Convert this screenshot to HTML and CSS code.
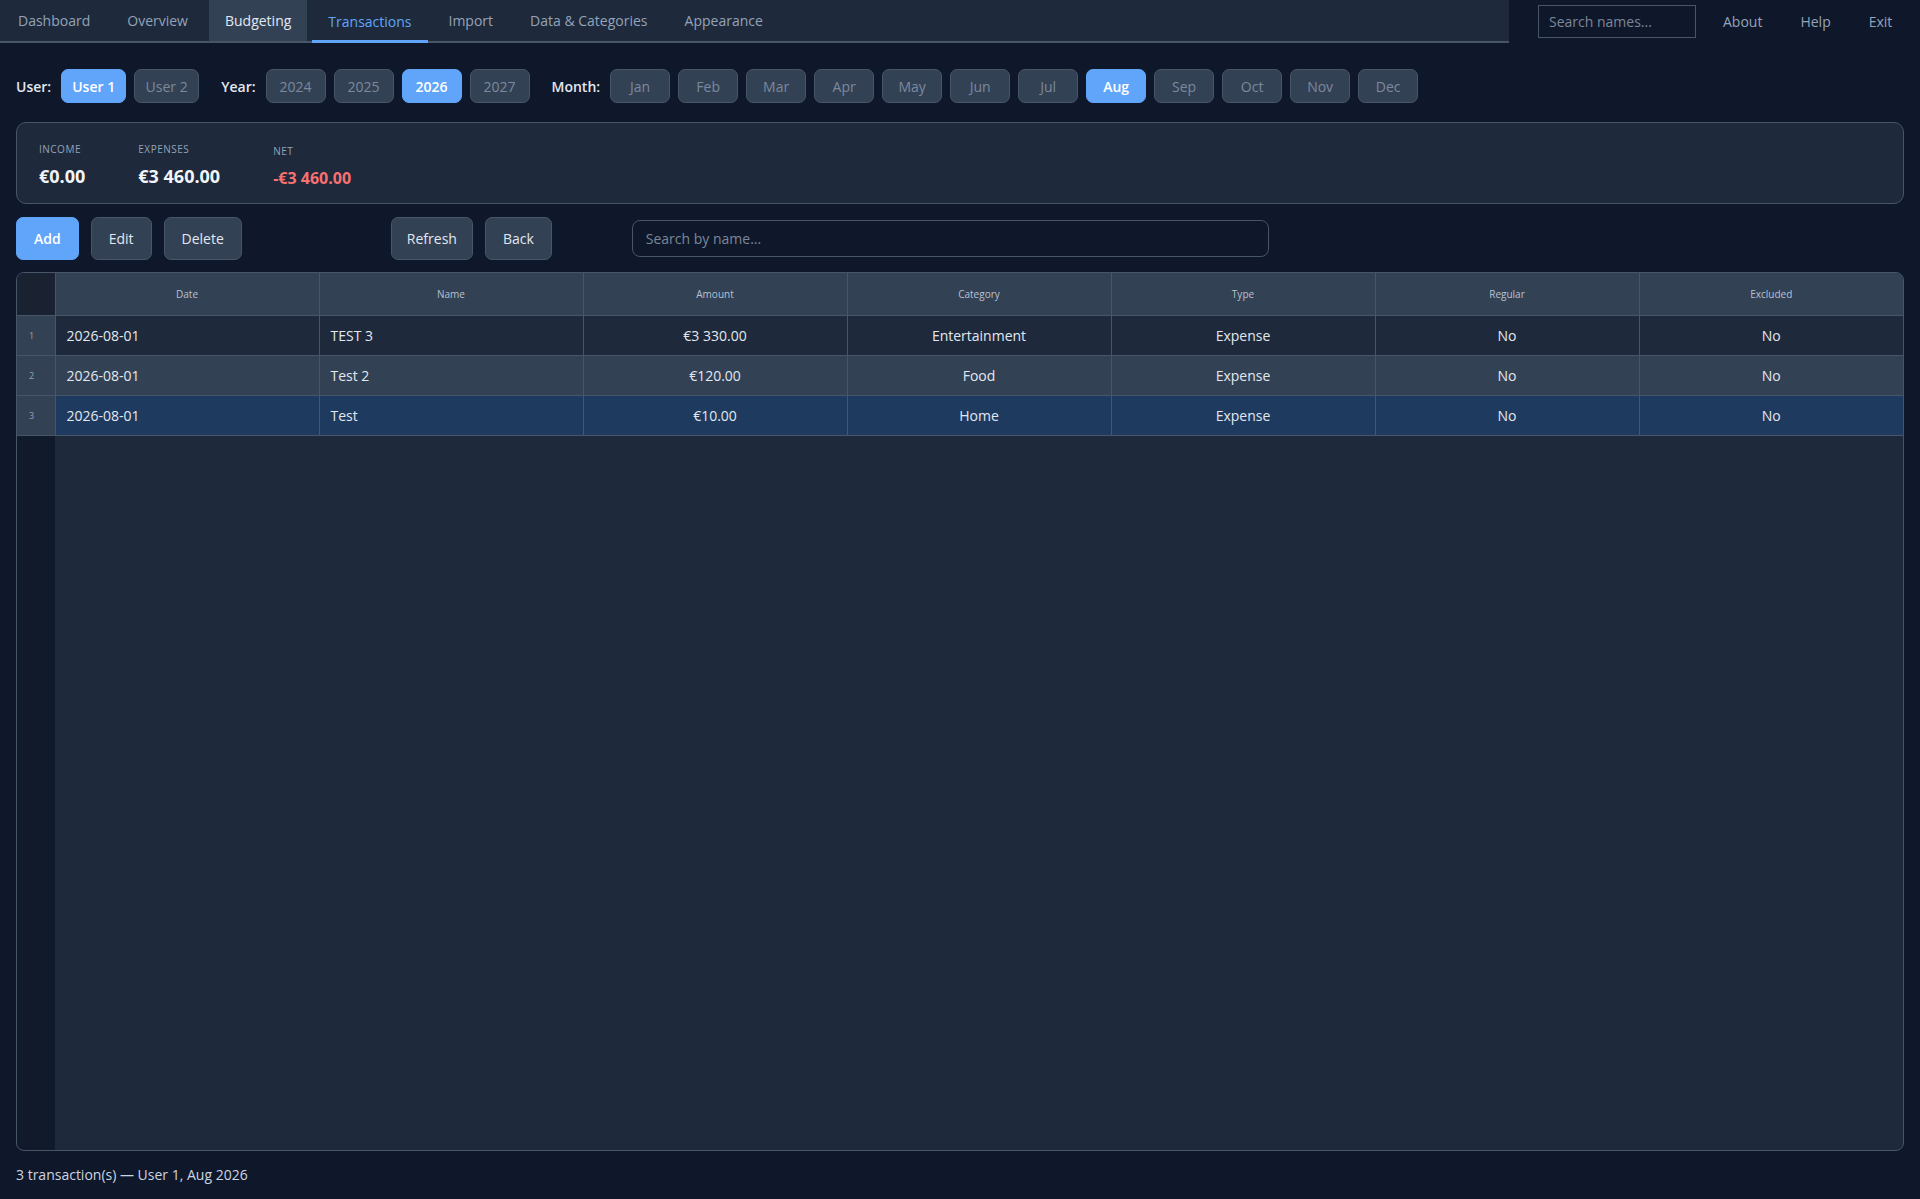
FILE: index.html
```html
<!DOCTYPE html>
<html lang="en">
<head>
    <meta charset="UTF-8">
    <meta name="viewport" content="width=device-width, initial-scale=1.0">
    <title>Transactions</title>
    <link rel="stylesheet" href="styles.css">
</head>
<body>
    <header class="topbar">
        <nav class="tabs">
            <a class="tab">Dashboard</a>
            <a class="tab">Overview</a>
            <a class="tab hover">Budgeting</a>
            <a class="tab active">Transactions</a>
            <a class="tab">Import</a>
            <a class="tab">Data &amp; Categories</a>
            <a class="tab">Appearance</a>
        </nav>
        <div class="top-right">
            <input class="name-search" type="text" placeholder="Search names...">
            <a class="top-link">About</a>
            <a class="top-link">Help</a>
            <a class="top-link">Exit</a>
        </div>
    </header>

    <main class="page">
        <div class="filters">
            <div class="filter-group">
                <span class="filter-label">User:</span>
                <button class="pill user selected">User 1</button>
                <button class="pill user">User 2</button>
            </div>
            <div class="filter-group">
                <span class="filter-label">Year:</span>
                <button class="pill">2024</button>
                <button class="pill">2025</button>
                <button class="pill selected">2026</button>
                <button class="pill">2027</button>
            </div>
            <div class="filter-group">
                <span class="filter-label">Month:</span>
                <button class="pill">Jan</button>
                <button class="pill">Feb</button>
                <button class="pill">Mar</button>
                <button class="pill">Apr</button>
                <button class="pill">May</button>
                <button class="pill">Jun</button>
                <button class="pill">Jul</button>
                <button class="pill selected">Aug</button>
                <button class="pill">Sep</button>
                <button class="pill">Oct</button>
                <button class="pill">Nov</button>
                <button class="pill">Dec</button>
            </div>
        </div>

        <section class="summary">
            <div class="stat">
                <div class="stat-label">Income</div>
                <div class="stat-value">€0.00</div>
            </div>
            <div class="stat">
                <div class="stat-label">Expenses</div>
                <div class="stat-value">€3 460.00</div>
            </div>
            <div class="stat net">
                <div class="stat-label">Net</div>
                <div class="stat-value">-€3 460.00</div>
            </div>
        </section>

        <div class="actions">
            <button class="btn primary">Add</button>
            <button class="btn">Edit</button>
            <button class="btn">Delete</button>
            <button class="btn spaced">Refresh</button>
            <button class="btn">Back</button>
            <input class="table-search" type="text" placeholder="Search by name...">
        </div>

        <div class="grid-wrap">
            <table class="grid">
                <thead>
                    <tr>
                        <th class="num"></th>
                        <th>Date</th>
                        <th>Name</th>
                        <th>Amount</th>
                        <th>Category</th>
                        <th>Type</th>
                        <th>Regular</th>
                        <th>Excluded</th>
                    </tr>
                </thead>
                <tbody>
                    <tr>
                        <td class="num">1</td>
                        <td class="left">2026-08-01</td>
                        <td class="left">TEST 3</td>
                        <td>€3 330.00</td>
                        <td>Entertainment</td>
                        <td>Expense</td>
                        <td>No</td>
                        <td>No</td>
                    </tr>
                    <tr class="alt">
                        <td class="num">2</td>
                        <td class="left">2026-08-01</td>
                        <td class="left">Test 2</td>
                        <td>€120.00</td>
                        <td>Food</td>
                        <td>Expense</td>
                        <td>No</td>
                        <td>No</td>
                    </tr>
                    <tr class="current">
                        <td class="num">3</td>
                        <td class="left">2026-08-01</td>
                        <td class="left">Test</td>
                        <td>€10.00</td>
                        <td>Home</td>
                        <td>Expense</td>
                        <td>No</td>
                        <td>No</td>
                    </tr>
                </tbody>
            </table>
        </div>

        <div class="status">3 transaction(s) — User 1, Aug 2026</div>
    </main>
</body>
</html>
```

FILE: styles.css
```css
* {
    box-sizing: border-box;
}
body {
    margin: 0;
    background-color: #0f172a;
    color: #e2e8f0;
    font-family: "Open Sans", "Noto Sans", sans-serif;
    font-size: 14px;
    height: 1199px;
    overflow: hidden;
}
.topbar {
    display: flex;
    height: 43px;
}
.tabs {
    display: flex;
    flex-shrink: 0;
    gap: 5px;
    width: 1509px;
    padding-left: 2px;
    background-color: #1e293b;
    border-bottom: 2px solid #475569;
}
.tab {
    display: flex;
    align-items: center;
    padding: 0 16px;
    color: #94a3b8;
    font-size: 14px;
    cursor: pointer;
}
.tab.hover {
    background-color: #334155;
    color: #e2e8f0;
}
.tab.active {
    color: #60a5fa;
    box-shadow: inset 0 -3px 0 #60a5fa;
    margin-bottom: -2px;
}
.top-right {
    display: flex;
    align-items: center;
    flex: 1;
    padding-left: 29px;
}
.name-search {
    width: 158px;
    height: 33px;
    background-color: #0f172a;
    border: 1px solid #475569;
    color: #e2e8f0;
    padding: 0 10px;
    font-family: inherit;
    font-size: 14px;
    margin-right: 27px;
}
.name-search::placeholder {
    color: #7b8798;
}
.top-link {
    color: #94a3b8;
    font-size: 14px;
    margin-right: 38px;
    cursor: pointer;
}
.page {
    padding: 26px 16px 0 16px;
}
.filters {
    display: flex;
    align-items: center;
    gap: 22px;
}
.filter-group {
    display: flex;
    align-items: center;
    gap: 8px;
}
.filter-label {
    font-weight: 600;
    font-size: 14px;
    color: #e2e8f0;
    margin-right: 2px;
}
.pill {
    min-width: 60px;
    height: 34px;
    padding: 0 9px;
    background-color: #334155;
    border: 1px solid #475569;
    border-radius: 7px;
    color: #7c899c;
    font-family: inherit;
    font-size: 14px;
}
.pill.user {
    min-width: 65px;
}
.pill.selected {
    background-color: #60a5fa;
    border-color: #60a5fa;
    color: #ffffff;
    font-weight: 600;
}
.summary {
    display: flex;
    gap: 53px;
    margin-top: 19px;
    height: 82px;
    padding: 19px 22px 0 22px;
    background-color: #1e293b;
    border: 1px solid #475569;
    border-radius: 10px;
}
.stat-label {
    font-size: 10px;
    text-transform: uppercase;
    letter-spacing: 0.5px;
    color: #94a3b8;
}
.stat-value {
    margin-top: 8px;
    font-size: 18px;
    font-weight: 700;
    color: #f1f5f9;
}
.stat.net {
    padding-top: 2px;
}
.stat.net .stat-value {
    font-size: 16px;
    color: #f87171;
    margin-top: 9px;
}
.actions {
    display: flex;
    align-items: center;
    gap: 12px;
    margin-top: 13px;
}
.btn {
    height: 43px;
    padding: 0 17px;
    background-color: #334155;
    border: 1px solid #475569;
    border-radius: 7px;
    color: #e2e8f0;
    font-family: inherit;
    font-size: 14px;
}
.btn.primary {
    background-color: #60a5fa;
    border-color: #60a5fa;
    color: #ffffff;
    font-weight: 600;
}
.btn.spaced {
    margin-left: 137px;
    padding: 0 15px;
}
.table-search {
    width: 637px;
    height: 37px;
    margin-left: 68px;
    padding: 0 13px;
    background-color: #0f172a;
    border: 1px solid #475569;
    border-radius: 8px;
    color: #e2e8f0;
    font-family: inherit;
    font-size: 14px;
}
.table-search::placeholder {
    color: #7b8798;
}
.grid-wrap {
    margin-top: 12px;
    height: 879px;
    border: 1px solid #475569;
    border-radius: 8px;
    overflow: hidden;
    background: linear-gradient(to right, #111a2b 0, #111a2b 38px, #1e293b 38px);
}
.grid {
    width: 100%;
    border-collapse: collapse;
    table-layout: fixed;
}
.grid th {
    height: 42px;
    background-color: #334155;
    color: #b8c2d0;
    font-size: 10px;
    font-weight: 400;
    border-right: 1px solid #475569;
    border-bottom: 1px solid #475569;
}
.grid th.num {
    width: 38px;
    background-color: #1a2232;
}
.grid td {
    height: 40px;
    text-align: center;
    font-size: 14px;
    color: #e2e8f0;
    border-right: 1px solid #475569;
    border-bottom: 1px solid #475569;
}
.grid th:last-child,
.grid td:last-child {
    border-right: none;
}
.grid td.left {
    text-align: left;
    padding-left: 11px;
}
.grid td.num {
    background-color: #334155;
    color: #94a3b8;
    font-size: 9px;
    text-align: left;
    padding-left: 12px;
}
.grid tbody tr {
    background-color: #1e293b;
}
.grid tbody tr.alt {
    background-color: #334155;
}
.grid tbody tr.current {
    background-color: #1e3a5f;
}
.status {
    margin-top: 14px;
    font-size: 14px;
    color: #cbd5e1;
}
```
